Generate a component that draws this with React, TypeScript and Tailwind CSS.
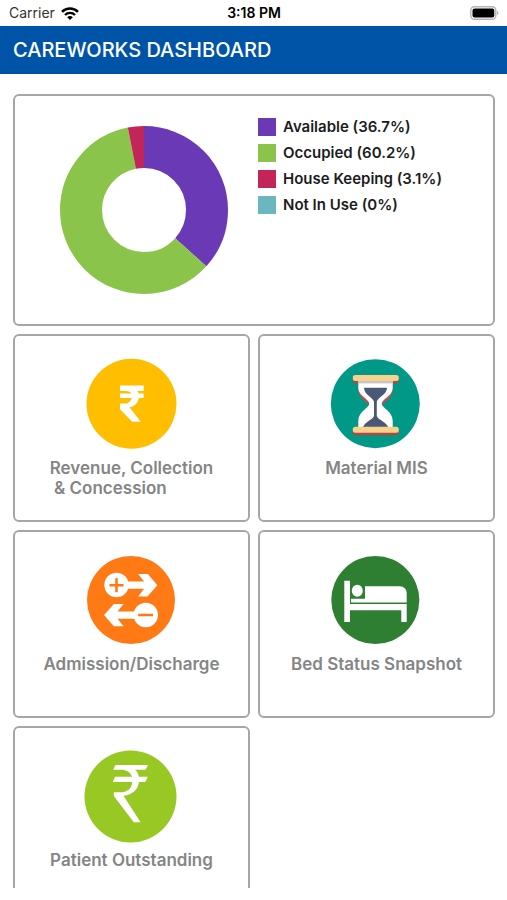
import type { ReactNode } from "react";

type Slice = { label: string; percent: number; stroke: string; swatch: string };

const beds: Slice[] = [
  { label: "Available", percent: 36.7, stroke: "#6a39b6", swatch: "bg-[#6a39b6]" },
  { label: "Occupied", percent: 60.2, stroke: "#8ac44a", swatch: "bg-[#8ac44a]" },
  { label: "House Keeping", percent: 3.1, stroke: "#c22557", swatch: "bg-[#c22557]" },
  { label: "Not In Use", percent: 0, stroke: "#6ab7c0", swatch: "bg-[#6ab7c0]" },
];

function Donut() {
  const used = beds.filter((slice) => slice.percent > 0);
  return (
    <svg viewBox="0 0 168 168" className="size-[168px] shrink-0" role="img" aria-label="Bed occupancy">
      <g transform="rotate(-90 84 84)" fill="none" strokeWidth="42">
        {used.map((slice, i) => {
          const before = used.slice(0, i).reduce((sum, s) => sum + s.percent, 0);
          return (
            <circle
              key={slice.label}
              cx="84"
              cy="84"
              r="63"
              pathLength={100}
              stroke={slice.stroke}
              strokeDasharray={`${slice.percent} ${100 - slice.percent}`}
              strokeDashoffset={-before}
            />
          );
        })}
      </g>
    </svg>
  );
}

function Icon({ children }: { children: ReactNode }) {
  return (
    <svg viewBox="0 0 92 92" className="size-[92px] overflow-visible" aria-hidden="true">
      {children}
    </svg>
  );
}

function RevenueIcon() {
  return (
    <Icon>
      <circle cx="45.5" cy="45.7" r="45" fill="#ffbf00" />
      <path
        fill="#fff"
        d="M34 27.5H57.7V33H51.2C52 33.8 52.5 34.6 52.8 35.5H57.7V40H52.8C52 45 48.7 48.4 43.5 49.3L54.7 63.7H46.2L34 51.2V45.5H38.5C42.5 45.5 45 43.5 45.6 40H34V35.5H45.2C44.3 33.7 42.3 33 39.2 33H34Z"
      />
    </Icon>
  );
}

function HourglassIcon() {
  return (
    <Icon>
      <circle cx="44.3" cy="45.7" r="44.5" fill="#009887" />
      <path
        fill="#c0504a"
        d="M27.2 25V32C27.2 39 34 42.5 37.5 46.5H51.8C55 42.5 61.8 39.5 61.8 32V25Z"
      />
      <rect x="21.8" y="19" width="46" height="6.3" rx="2.5" fill="#b5473f" />
      <path
        fill="#fff"
        d="M27.3 23H61.7V30C61.7 38 50.7 41 50.7 45.7C50.7 50 61.7 53 61.7 63V69H27.3V63C27.3 53 38.3 50 38.3 45.7C38.3 41 27.3 38 27.3 30Z"
      />
      <rect x="27.3" y="23" width="34.4" height="2.4" fill="#c3c6cb" />
      <path
        fill="#4a5878"
        d="M33 29.7H56C56 36.5 47 39 45.8 43.5V58C47 62 53.5 62.5 57.2 69H32C35.5 62.5 41.5 62 43 58V43.5C41.5 39 33 36.5 33 29.7Z"
      />
      <rect x="21.8" y="71" width="46" height="6.3" rx="2.5" fill="#b5473f" />
      <rect x="21.8" y="17" width="46" height="6" rx="2.5" fill="#f9d18b" />
      <rect x="21.8" y="68.7" width="46" height="6" rx="2.5" fill="#f9d18b" />
    </Icon>
  );
}

function TransferIcon() {
  return (
    <Icon>
      <circle cx="45" cy="46" r="44" fill="#ff7a14" />
      <g fill="#fff">
        <circle cx="30.5" cy="31" r="12.2" />
        <path d="M40 27.5H58.1L52.1 20H61.9L71.3 31.2L61.5 42.4H52.1L58.1 34.7H40Z" />
        <circle cx="59.8" cy="61" r="12.2" />
        <path d="M51 57.5H31.5L37.5 50H27.9L18 61L27.9 72.3H37.5L31.5 64.7H51Z" />
      </g>
      <path d="M23.5 31.2H37.5M30.5 24.2V38.2M52.2 61H67" stroke="#ff7a14" strokeWidth="2.6" />
    </Icon>
  );
}

function BedIcon() {
  return (
    <Icon>
      <circle cx="44.3" cy="46" r="44" fill="#2f7f33" />
      <g fill="#fff">
        <path d="M13.3 26.7H19V50H75.7V68H70.3V56.2H19V68H13.3Z" />
        <ellipse cx="26.3" cy="36.7" rx="5.5" ry="6" />
        <path d="M20 44.7H34V32.3H68.5C73 32.3 75.7 35.5 75.7 39V48.4H20Z" />
      </g>
    </Icon>
  );
}

function OutstandingIcon() {
  return (
    <Icon>
      <circle cx="44.5" cy="46.5" r="46" fill="#98c823" />
      <path
        fill="#fff"
        d="M29.4 15H62L59.5 19.7H49.2C51.2 21.4 52.5 23.8 52.9 26.7H61.8L59.3 32H53C52.2 39 47 44.8 37.5 45.8L54.6 72.3H47.8L27.8 46V42.3H33.5C41.5 42.3 45.6 38.8 46.3 32H26.8L29 26.7H45.9C44.6 22 40.5 19.7 35 19.7H27.2Z"
      />
    </Icon>
  );
}

const tiles = [
  { icon: <RevenueIcon />, label: "Revenue, Collection\n & Concession" },
  { icon: <HourglassIcon />, label: "Material MIS" },
  { icon: <TransferIcon />, label: "Admission/Discharge" },
  { icon: <BedIcon />, label: "Bed Status Snapshot" },
  { icon: <OutstandingIcon />, label: "Patient Outstanding" },
];

function StatusBar() {
  return (
    <div className="grid h-[26px] shrink-0 grid-cols-3 items-center pr-2 pl-[9px] text-sm text-black">
      <div className="flex items-center gap-1.5 text-[#333]">
        Carrier
        <svg viewBox="0 0 18 13" className="h-[13px] w-[18px]" role="img" aria-label="Wi-Fi">
          <g fill="none" stroke="#000" strokeWidth="2.4">
            <path d="M1 4.8C5.5 .3 12.5 .3 17 4.8" />
            <path d="M4 8C6.8 5.2 11.2 5.2 14 8" />
          </g>
          <path d="M6.2 10.2C7.8 8.7 10.2 8.7 11.8 10.2L9 13Z" />
        </svg>
      </div>
      <time className="text-center font-semibold">3:18 PM</time>
      <svg viewBox="0 0 29 14" className="h-[14px] w-[29px] justify-self-end" role="img" aria-label="Battery full">
        <rect x=".8" y=".8" width="25" height="12.4" rx="3.5" fill="#fff" stroke="#b4b4b4" strokeWidth="1.4" />
        <rect x="2.5" y="2.5" width="21.8" height="9" rx="2" />
        <path d="M27 4.8C28.8 5.4 28.8 8.6 27 9.2Z" fill="#b4b4b4" />
      </svg>
    </div>
  );
}

export default function App() {
  return (
    <div className="flex h-screen flex-col bg-white pb-3 font-['Inter',sans-serif]">
      <StatusBar />
      <header className="flex h-12 shrink-0 items-center bg-[#0054a8] px-[13px]">
        <h1 className="text-xl font-medium text-white">CAREWORKS DASHBOARD</h1>
      </header>
      <main className="min-h-0 flex-1 overflow-y-auto pt-5 pr-3 pl-[13px] [scrollbar-width:none]">
        <section className="flex items-start gap-[30px] rounded-md border-2 border-[#a6a6a6] pt-[22px] pb-[30px] pl-[45px]">
          <div className="pt-2">
            <Donut />
          </div>
          <ul className="flex flex-col gap-2">
            {beds.map((slice) => (
              <li key={slice.label} className="flex items-center gap-[7px] text-[15px] leading-[18px] font-semibold text-[#1c1c1c]">
                <span className={`size-[18px] ${slice.swatch}`} />
                {slice.label} ({slice.percent}%)
              </li>
            ))}
          </ul>
        </section>
        <div className="grid grid-cols-2 gap-2 py-2">
          {tiles.map((tile) => (
            <button
              key={tile.label}
              type="button"
              className="flex h-[188px] flex-col items-center gap-2 rounded-md border-2 border-[#a6a6a6] pt-[22px]"
            >
              {tile.icon}
              <span className="text-left text-[17px] leading-5 font-semibold whitespace-pre text-[#858585]">
                {tile.label}
              </span>
            </button>
          ))}
        </div>
      </main>
    </div>
  );
}
